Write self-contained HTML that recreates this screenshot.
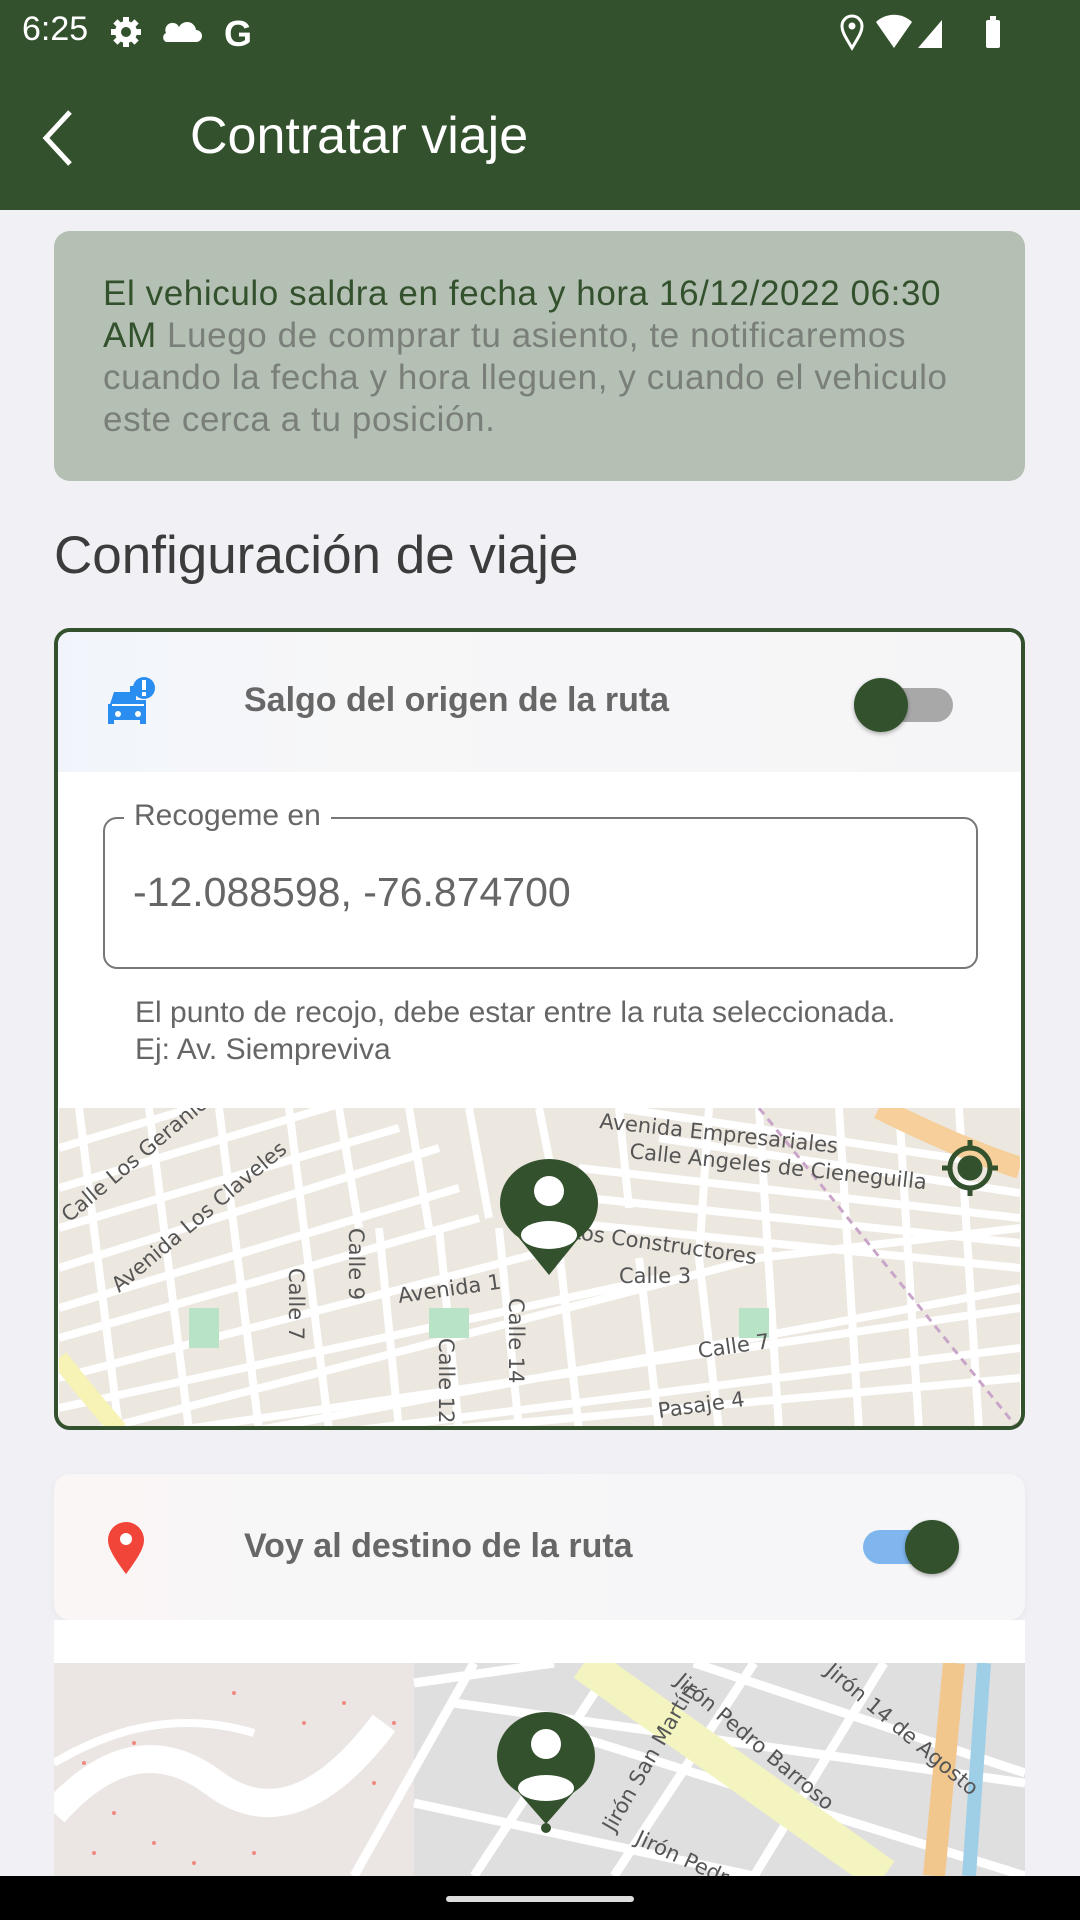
<!DOCTYPE html>
<html><head><meta charset="utf-8"><style>
*{margin:0;padding:0;box-sizing:border-box}
body{width:1080px;height:1920px;overflow:hidden;background:#f1f1f5;font-family:"Liberation Sans",sans-serif;position:relative}
.abs{position:absolute}
</style></head><body>
<div class="abs" style="left:0;top:0;width:1080px;height:210px;background:#33512d"></div>
<div class="abs" style="left:22px;top:10px;color:#fff;font-size:34px;">6:25</div>
<svg class="abs" style="left:108px;top:14px" width="160" height="40" viewBox="0 0 160 40">
<g fill="#fff"><circle cx="18" cy="18" r="11"/><rect x="15" y="3" width="6" height="30"/><rect x="3" y="15" width="30" height="6"/><rect x="15" y="3" width="6" height="30" transform="rotate(45 18 18)"/><rect x="15" y="3" width="6" height="30" transform="rotate(-45 18 18)"/></g><circle cx="18" cy="18" r="5" fill="#33512d"/>
<path d="M58 28h30a6 6 0 0 0 0-12 9 9 0 0 0-17-3 7 7 0 0 0-13 6 5 5 0 0 0 0 9z" fill="#fff"/>
<text x="116" y="32" fill="#fff" font-size="36" font-weight="bold" font-family="Liberation Sans">G</text></svg>
<svg class="abs" style="left:838px;top:12px" width="180" height="40" viewBox="0 0 180 40">
<path d="M14 36C8 26 4 20 4 14a10 10 0 0 1 20 0c0 6-4 12-10 22z" fill="none" stroke="#fff" stroke-width="3"/><circle cx="14" cy="14" r="3.5" fill="#fff"/>
<path d="M56 36L38 10a26 26 0 0 1 36 0z" fill="#fff"/>
<path d="M80 36L104 8v28z" fill="#fff"/>
<rect x="148" y="8" width="14" height="28" rx="2" fill="#fff"/><rect x="152" y="4" width="6" height="5" fill="#fff"/></svg>
<svg class="abs" style="left:40px;top:110px" width="40" height="56" viewBox="0 0 40 56"><path d="M30 2L6 28l24 26" fill="none" stroke="#fff" stroke-width="5"/></svg>
<div class="abs" style="left:190px;top:108px;color:#fff;font-size:52px;line-height:56px">Contratar viaje</div>

<div class="abs" style="left:54px;top:231px;width:971px;height:250px;background:#b4c0b3;border-radius:16px;padding:42px 0 0 49px;font-size:35px;letter-spacing:0.6px;line-height:42px;color:#7a7f7a;white-space:nowrap">
<span style="color:#33512d">El vehiculo saldra en fecha y hora 16/12/2022 06:30<br>AM</span> Luego de comprar tu asiento, te notificaremos<br>cuando la fecha y hora lleguen, y cuando el vehiculo<br>este cerca a tu posición.</div>

<div class="abs" style="left:54px;top:525px;font-size:53px;color:#3c3c3c">Configuración de viaje</div>

<div class="abs" style="left:54px;top:628px;width:971px;height:802px;background:#fff;border:4px solid #33512d;border-radius:16px;overflow:hidden">
 <div style="position:absolute;left:0;top:0;width:963px;height:140px;background:linear-gradient(90deg,#f1f5fb,#f7f7f8 30%,#f5f5f7)"></div>
 <svg class="abs" style="left:42px;top:42px" width="60" height="60" viewBox="0 0 60 60"><path d="M10 30l4-12h16v-6h6v14h10v24h-6v-4H14v4H8V30z" fill="#2a8ef0"/><circle cx="18" cy="40" r="3" fill="#fff"/><circle cx="38" cy="40" r="3" fill="#fff"/><rect x="12" y="30" width="32" height="2" fill="#fff"/><circle cx="44" cy="14" r="11" fill="#2a8ef0"/><rect x="42" y="6" width="4" height="10" fill="#fff"/><rect x="42" y="18" width="4" height="4" fill="#fff"/></svg>
 <div class="abs" style="left:186px;top:49px;font-size:34px;color:#676767;font-weight:bold">Salgo del origen de la ruta</div>
 <div class="abs" style="left:800px;top:56px;width:95px;height:34px;border-radius:17px;background:#a8a8a8"></div>
 <div class="abs" style="left:796px;top:46px;width:54px;height:54px;border-radius:50%;background:#33512d;box-shadow:0 2px 4px rgba(0,0,0,.3)"></div>
 <div class="abs" style="left:45px;top:185px;width:875px;height:152px;border:2px solid #777;border-radius:14px"></div>
 <div class="abs" style="left:66px;top:167px;background:#fff;padding:0 10px;font-size:30px;color:#666">Recogeme en</div>
 <div class="abs" style="left:75px;top:237px;font-size:41px;color:#666">-12.088598, -76.874700</div>
 <div class="abs" style="left:77px;top:362px;font-size:30px;line-height:37px;color:#666;white-space:nowrap">El punto de recojo, debe estar entre la ruta seleccionada.<br>Ej: Av. Siempreviva</div>
 <svg class="abs" style="left:1px;top:476px" width="961" height="322" viewBox="0 0 961 322">
  <rect width="961" height="322" fill="#ece7df"/>
  <g stroke="#fff" stroke-width="8" fill="none">
   <path d="M0 80L300 -10M0 160L380 40M0 230L420 110M40 322L700 150L961 120M0 300L600 170M120 322L961 200M300 322L961 240M560 0L961 60M520 60L961 110M460 110L961 160M0 40L200 -20M0 120L340 20M0 200L400 80M0 270L500 140M200 322L961 180M380 322L961 270M600 30L961 85M480 85L961 135"/>
   <path d="M270 322L230 0M340 322L320 120M400 322L380 120M460 322L440 120M520 322L500 140M600 322L580 150M660 322L640 150M720 322L700 0M800 322L780 0M860 322L840 0M920 322L900 0M650 0L640 150M60 322L20 0M130 322L90 0M200 322L160 0M300 120L280 0M370 120L350 0M430 110L410 0M500 100L480 0M570 100L560 0"/>
  </g>
  <path d="M820 0Q900 40 961 60" stroke="#f6cf9a" stroke-width="22" fill="none"/>
  <path d="M0 250Q40 300 60 322" stroke="#f6f3b5" stroke-width="18" fill="none"/>
  <path d="M700 0L960 322" stroke="#c9a6c9" stroke-width="3" stroke-dasharray="8 6"/>
  <rect x="370" y="200" width="40" height="30" fill="#b9e3c6"/><rect x="680" y="200" width="30" height="30" fill="#b9e3c6"/><rect x="130" y="200" width="30" height="40" fill="#b9e3c6"/>
  <g font-size="21" fill="#555" font-family="DejaVu Sans">
   <text x="540" y="20" transform="rotate(6 540 20)">Avenida Empresariales</text>
   <text x="570" y="50" transform="rotate(6 570 50)">Calle Angeles de Cieneguilla</text>
   <text x="510" y="130" transform="rotate(8 510 130)">Los Constructores</text>
   <text x="340" y="195" transform="rotate(-8 340 195)">Avenida 1</text>
   <text x="560" y="175">Calle 3</text>
   <text x="10" y="115" transform="rotate(-40 10 115)">Calle Los Geranios</text>
   <text x="60" y="185" transform="rotate(-40 60 185)">Avenida Los Claveles</text>
   <text x="640" y="250" transform="rotate(-8 640 250)">Calle 7</text>
   <text x="600" y="310" transform="rotate(-8 600 310)">Pasaje 4</text>
   <text x="230" y="160" transform="rotate(90 230 160)">Calle 7</text>
   <text x="290" y="120" transform="rotate(90 290 120)">Calle 9</text>
   <text x="380" y="230" transform="rotate(90 380 230)">Calle 12</text>
   <text x="450" y="190" transform="rotate(90 450 190)">Calle 14</text>
  </g>
  <g transform="translate(440 55)"><ellipse cx="50" cy="40" rx="49" ry="44" fill="#33512d"/><path d="M20 75L50 112 80 75z" fill="#33512d"/><circle cx="50" cy="28" r="15" fill="#fff"/><ellipse cx="50" cy="72" rx="28" ry="14" fill="#fff"/></g>
  <g transform="translate(883 32)" fill="none" stroke="#33512d" stroke-width="5"><circle cx="28" cy="28" r="20"/><path d="M28 0v10M28 46v10M0 28h10M46 28h10"/><circle cx="28" cy="28" r="10" fill="#33512d"/></g>
 </svg>
</div>

<div class="abs" style="left:54px;top:1474px;width:971px;height:146px;border-radius:16px;background:linear-gradient(90deg,#fbf6f6,#f7f7f8 30%,#f6f6f8);box-shadow:0 2px 8px rgba(0,0,0,.05)"></div>
<div class="abs" style="left:54px;top:1620px;width:971px;height:43px;background:#fff"></div>
<svg class="abs" style="left:106px;top:1520px" width="40" height="56" viewBox="0 0 40 56"><path d="M20 54C8 38 2 28 2 20a18 18 0 0 1 36 0c0 8-6 18-18 34z" fill="#f2453a"/><circle cx="20" cy="19" r="6" fill="#fff"/></svg>
<div class="abs" style="left:244px;top:1527px;font-size:34px;color:#676767;font-weight:bold">Voy al destino de la ruta</div>
<div class="abs" style="left:863px;top:1530px;width:90px;height:34px;border-radius:17px;background:#7fb6ee"></div>
<div class="abs" style="left:905px;top:1520px;width:54px;height:54px;border-radius:50%;background:#33512d;box-shadow:0 2px 4px rgba(0,0,0,.3)"></div>
<svg class="abs" style="left:54px;top:1663px" width="971" height="213" viewBox="0 0 971 213">
 <rect width="971" height="213" fill="#e0dfdf"/>
 <rect width="360" height="213" fill="#ebe6e3"/>
 <g fill="#f08a80"><circle cx="30" cy="100" r="2"/><circle cx="60" cy="150" r="2"/><circle cx="100" cy="180" r="2"/><circle cx="140" cy="200" r="2"/><circle cx="200" cy="190" r="2"/><circle cx="250" cy="60" r="2"/><circle cx="290" cy="40" r="2"/><circle cx="40" cy="190" r="2"/><circle cx="80" cy="80" r="2"/><circle cx="320" cy="120" r="2"/><circle cx="340" cy="60" r="2"/><circle cx="180" cy="30" r="2"/></g>
 <path d="M0 150Q80 60 160 120T330 60" stroke="#fff" stroke-width="28" fill="none"/>
 <path d="M0 100Q100 40 200 70" stroke="#fff" stroke-width="8" fill="none"/>
 <g stroke="#fff" stroke-width="9" fill="none"><path d="M420 0L300 213M480 60L971 213M560 0L420 213M700 0L560 213M830 0L700 213M400 40L971 120M360 140L700 213M640 0L971 110M360 20L500 0"/></g>
 <path d="M530 0L830 213" stroke="#f3f4c0" stroke-width="36"/>
 <path d="M900 0L880 213" stroke="#f2c78e" stroke-width="22"/><path d="M930 0L915 213" stroke="#9fcfe6" stroke-width="14"/>
 <g font-size="21" fill="#555" font-family="DejaVu Sans"><text x="620" y="20" transform="rotate(40 620 20)">Jirón Pedro Barroso</text><text x="770" y="10" transform="rotate(40 770 10)">Jirón 14 de Agosto</text><text x="560" y="170" transform="rotate(-60 560 170)">Jirón San Martín</text><text x="580" y="180" transform="rotate(25 580 180)">Jirón Pedro</text></g>
 <g transform="translate(442 53)"><ellipse cx="50" cy="40" rx="49" ry="44" fill="#33512d"/><path d="M22 76L50 108 78 76z" fill="#33512d"/><circle cx="50" cy="112" r="5" fill="#33512d"/><circle cx="50" cy="28" r="15" fill="#fff"/><ellipse cx="50" cy="72" rx="28" ry="13" fill="#fff"/></g>
</svg>
<div class="abs" style="left:0;top:1876px;width:1080px;height:44px;background:#000"></div>
<div class="abs" style="left:446px;top:1896px;width:188px;height:6px;border-radius:3px;background:#ddd"></div>
</body></html>
